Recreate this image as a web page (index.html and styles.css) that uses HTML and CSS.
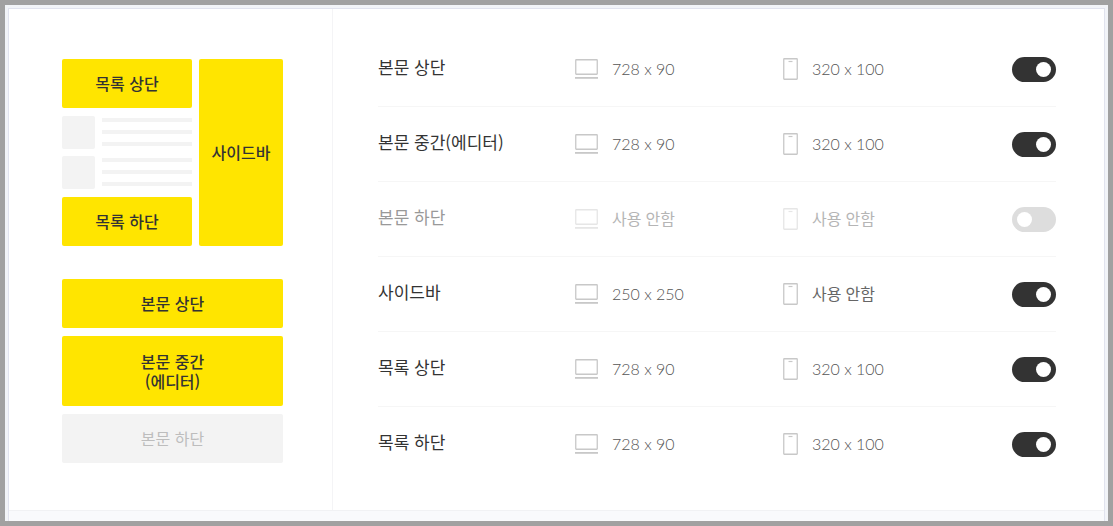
FILE: index.html
```html
<!DOCTYPE html>
<html lang="ko">
<head>
<meta charset="utf-8">
<title>광고 설정</title>
<link rel="stylesheet" href="styles.css">
</head>
<body>
<svg class="sprite" aria-hidden="true">
  <symbol id="pc" viewBox="0 0 23 20">
    <rect x=".75" y=".75" width="21.5" height="14.5" rx=".5" fill="none" stroke="currentColor" stroke-width="1.3"/>
    <path d="M0 18.9h23" stroke="currentColor" stroke-width="1.8"/>
  </symbol>
  <symbol id="phone" viewBox="0 0 15 22">
    <rect x=".75" y=".75" width="13.5" height="20.5" rx=".5" fill="none" stroke="currentColor" stroke-width="1.3"/>
    <path d="M5.5 3.5h4" stroke="currentColor" stroke-width="1.2"/>
  </symbol>
</svg>
<div class="frame">
  <main class="card">
    <div class="content">
      <section class="preview">
        <div class="list-layout">
          <div class="list-main">
            <div class="slot">목록 상단</div>
            <div class="posts">
              <div class="post"><div class="thumb"></div><div class="lines"><i></i><i></i><i></i></div></div>
              <div class="post"><div class="thumb"></div><div class="lines"><i></i><i></i><i></i></div></div>
            </div>
            <div class="slot">목록 하단</div>
          </div>
          <div class="slot side">사이드바</div>
        </div>
        <div class="body-layout">
          <div class="slot">본문 상단</div>
          <div class="slot tall"><span>본문 중간</span><span>(에디터)</span></div>
          <div class="slot empty">본문 하단</div>
        </div>
      </section>
      <ul class="rows">
        <li class="row">
          <label class="name" for="s1">본문 상단</label>
          <span class="size"><svg class="pc"><use href="#pc"/></svg>728 x 90</span>
          <span class="size"><svg class="phone"><use href="#phone"/></svg>320 x 100</span>
          <input class="switch" type="checkbox" id="s1" checked>
        </li>
        <li class="row">
          <label class="name" for="s2">본문 중간(에디터)</label>
          <span class="size"><svg class="pc"><use href="#pc"/></svg>728 x 90</span>
          <span class="size"><svg class="phone"><use href="#phone"/></svg>320 x 100</span>
          <input class="switch" type="checkbox" id="s2" checked>
        </li>
        <li class="row off">
          <label class="name" for="s3">본문 하단</label>
          <span class="size none"><svg class="pc"><use href="#pc"/></svg>사용 안함</span>
          <span class="size none"><svg class="phone"><use href="#phone"/></svg>사용 안함</span>
          <input class="switch" type="checkbox" id="s3">
        </li>
        <li class="row">
          <label class="name" for="s4">사이드바</label>
          <span class="size"><svg class="pc"><use href="#pc"/></svg>250 x 250</span>
          <span class="size none"><svg class="phone"><use href="#phone"/></svg>사용 안함</span>
          <input class="switch" type="checkbox" id="s4" checked>
        </li>
        <li class="row">
          <label class="name" for="s5">목록 상단</label>
          <span class="size"><svg class="pc"><use href="#pc"/></svg>728 x 90</span>
          <span class="size"><svg class="phone"><use href="#phone"/></svg>320 x 100</span>
          <input class="switch" type="checkbox" id="s5" checked>
        </li>
        <li class="row">
          <label class="name" for="s6">목록 하단</label>
          <span class="size"><svg class="pc"><use href="#pc"/></svg>728 x 90</span>
          <span class="size"><svg class="phone"><use href="#phone"/></svg>320 x 100</span>
          <input class="switch" type="checkbox" id="s6" checked>
        </li>
      </ul>
    </div>
  </main>
</div>
</body>
</html>
```
FILE: styles.css
```css
* { box-sizing: border-box; }

body {
  margin: 0;
  font-family: "Noto Sans CJK KR", sans-serif;
  font-size: 16px;
  color: #333;
}

.sprite { display: none; }

.frame {
  display: flex;
  min-height: 100vh;
  padding: 3px 3px 0;
  border: 5px solid #a1a1a1;
  background: #f2f4f8;
}

.card {
  flex: 1;
  border: 1px solid #e1e3ee;
  border-bottom: 0;
  background: #f9fafc;
}

.content {
  display: flex;
  border-bottom: 1px solid #f1f2f4;
  background: #fff;
}

.preview {
  flex: none;
  width: 324px;
  padding: 50px 49px 47px 53px;
  border-right: 1px solid #f4f4f6;
}

.list-layout {
  display: flex;
  gap: 7px;
  margin-bottom: 33px;
}

.list-main,
.body-layout {
  display: flex;
  flex-direction: column;
  gap: 8px;
}

.list-main { width: 130px; }

.slot {
  display: flex;
  flex-direction: column;
  align-items: center;
  justify-content: center;
  min-height: 49px;
  padding-bottom: 1px;
  border-radius: 2px;
  background: #ffe500;
  font-weight: 500;
  line-height: 20px;
}

.side { flex: 1; }
.tall { min-height: 70px; }

.empty {
  background: #f3f3f3;
  color: #bdbdbd;
  font-weight: 400;
}

.posts {
  display: flex;
  flex-direction: column;
  gap: 7px;
}

.post {
  display: flex;
  gap: 7px;
}

.thumb {
  width: 33px;
  height: 33px;
  border-radius: 2px;
  background: #f3f3f3;
}

.lines {
  display: flex;
  flex: 1;
  flex-direction: column;
  gap: 8px;
  padding-top: 2px;
}

.lines i {
  height: 4px;
  background: #f3f3f3;
}

.rows {
  flex: 1;
  margin: 0;
  padding: 23px 48px 0 45px;
  list-style: none;
}

.row {
  display: grid;
  grid-template-columns: 197fr 208fr 229fr 44px;
  align-items: center;
  height: 75px;
  border-bottom: 1px solid #f6f6f6;
}

.row:last-child { border-color: transparent; }

.name {
  padding-bottom: 5px;
  font-size: 17px;
  line-height: 24px;
}

.size {
  display: flex;
  align-items: center;
  gap: 14px;
  color: #555;
  font-family: Lato, "Noto Sans CJK KR", sans-serif;
  font-weight: 300;
  line-height: 24px;
}

.none {
  color: #666;
  font-weight: 400;
}

.size svg { color: #c8c8c8; }

.pc {
  width: 23px;
  height: 20px;
}

.phone {
  width: 15px;
  height: 22px;
}

.off .name { color: #999; }
.off .size { color: #b5b5b5; }
.off .size svg { color: #e6e6e6; }

.switch {
  display: flex;
  align-items: center;
  width: 44px;
  height: 25px;
  margin: 0;
  padding: 0 5px;
  border-radius: 13px;
  background: #ddd;
  appearance: none;
  cursor: pointer;
}

.switch::before {
  width: 15px;
  height: 15px;
  border-radius: 50%;
  background: #fff;
  content: "";
}

.switch:checked {
  justify-content: flex-end;
  background: #333;
}
```
